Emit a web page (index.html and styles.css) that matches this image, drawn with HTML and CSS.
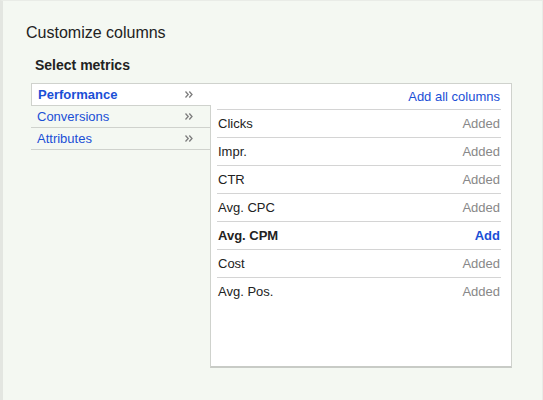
FILE: index.html
```html
<!DOCTYPE html>
<html>
<head>
<meta charset="utf-8">
<link rel="stylesheet" href="styles.css">
</head>
<body>
<div class="page">
  <h1 class="title">Customize columns</h1>
  <h2 class="subtitle">Select metrics</h2>
  <div class="picker">
    <ul class="menu">
      <li class="menu-item active"><span>Performance</span><svg class="chev" width="8" height="7" viewBox="0 0 8 7"><path d="M0.5 0.5 L3.2 3.5 L0.5 6.5 M4.3 0.5 L7 3.5 L4.3 6.5" fill="none" stroke="#7d7d7d" stroke-width="1.3"/></svg></li>
      <li class="menu-item"><span>Conversions</span><svg class="chev" width="8" height="7" viewBox="0 0 8 7"><path d="M0.5 0.5 L3.2 3.5 L0.5 6.5 M4.3 0.5 L7 3.5 L4.3 6.5" fill="none" stroke="#7d7d7d" stroke-width="1.3"/></svg></li>
      <li class="menu-item"><span>Attributes</span><svg class="chev" width="8" height="7" viewBox="0 0 8 7"><path d="M0.5 0.5 L3.2 3.5 L0.5 6.5 M4.3 0.5 L7 3.5 L4.3 6.5" fill="none" stroke="#7d7d7d" stroke-width="1.3"/></svg></li>
    </ul>
    <div class="panel">
      <div class="panel-head"><a class="link">Add all columns</a></div>
      <div class="row"><span>Clicks</span><span class="added">Added</span></div>
      <div class="row"><span>Impr.</span><span class="added">Added</span></div>
      <div class="row"><span>CTR</span><span class="added">Added</span></div>
      <div class="row"><span>Avg. CPC</span><span class="added">Added</span></div>
      <div class="row strong"><span>Avg. CPM</span><a class="add">Add</a></div>
      <div class="row"><span>Cost</span><span class="added">Added</span></div>
      <div class="row last"><span>Avg. Pos.</span><span class="added">Added</span></div>
    </div>
  </div>
</div>
</body>
</html>
```
FILE: styles.css
```css
html, body {
  margin: 0;
  padding: 0;
  height: 100%;
}
body {
  background: #f4f8f2;
  font-family: "Liberation Sans", Arial, sans-serif;
  color: #222;
}
.page {
  box-sizing: border-box;
  height: 400px;
  border-left: 3px solid #e3e6e1;
  border-top: 1px solid #e9ece7;
  border-right: 1px solid #e9ece7;
  padding: 22px 0 0 23px;
}
.title {
  margin: 0;
  font-size: 16px;
  font-weight: normal;
  line-height: 20px;
  color: #222;
}
.subtitle {
  margin: 14px 0 0 9px;
  font-size: 14px;
  font-weight: bold;
  line-height: 16px;
  color: #222;
}
.picker {
  display: flex;
  align-items: flex-start;
  margin: 10px 0 0 5px;
}
.menu {
  list-style: none;
  margin: 0;
  padding: 0;
  width: 179px;
  flex: none;
}
.menu-item {
  display: flex;
  align-items: center;
  justify-content: space-between;
  height: 21px;
  padding: 0 17px 0 6px;
  border-bottom: 1px solid #cfd2cd;
  font-size: 13px;
  color: #1a4fd6;
}
.menu-item.active {
  position: relative;
  z-index: 1;
  width: 180px;
  box-sizing: border-box;
  height: 23px;
  padding-left: 6px;
  padding-right: 18px;
  background: #fff;
  border: 1px solid #cfd2cd;
  border-right: none;
  font-weight: bold;
  color: #1a4fd6;
}
.chev {
  display: block;
}
.panel {
  box-sizing: border-box;
  width: 302px;
  height: 285px;
  background: #fff;
  border: 1px solid #cfd2cd;
  border-bottom: 2px solid #c8cbc6;
  padding: 0 10px 0 6px;
}
.panel-head {
  display: flex;
  justify-content: flex-end;
  align-items: center;
  height: 25px;
  padding-right: 1px;
  border-bottom: 1px solid #d4d4d4;
}
.link {
  font-size: 13px;
  color: #1a4fd6;
}
.row {
  display: flex;
  justify-content: space-between;
  align-items: center;
  height: 27px;
  padding: 0 1px;
  border-bottom: 1px solid #d4d4d4;
  font-size: 13px;
  color: #222;
}
.row.last {
  border-bottom: none;
}
.row.strong {
  font-weight: bold;
}
.added {
  color: #888;
}
.add {
  color: #1a4fd6;
  font-weight: bold;
}
```
